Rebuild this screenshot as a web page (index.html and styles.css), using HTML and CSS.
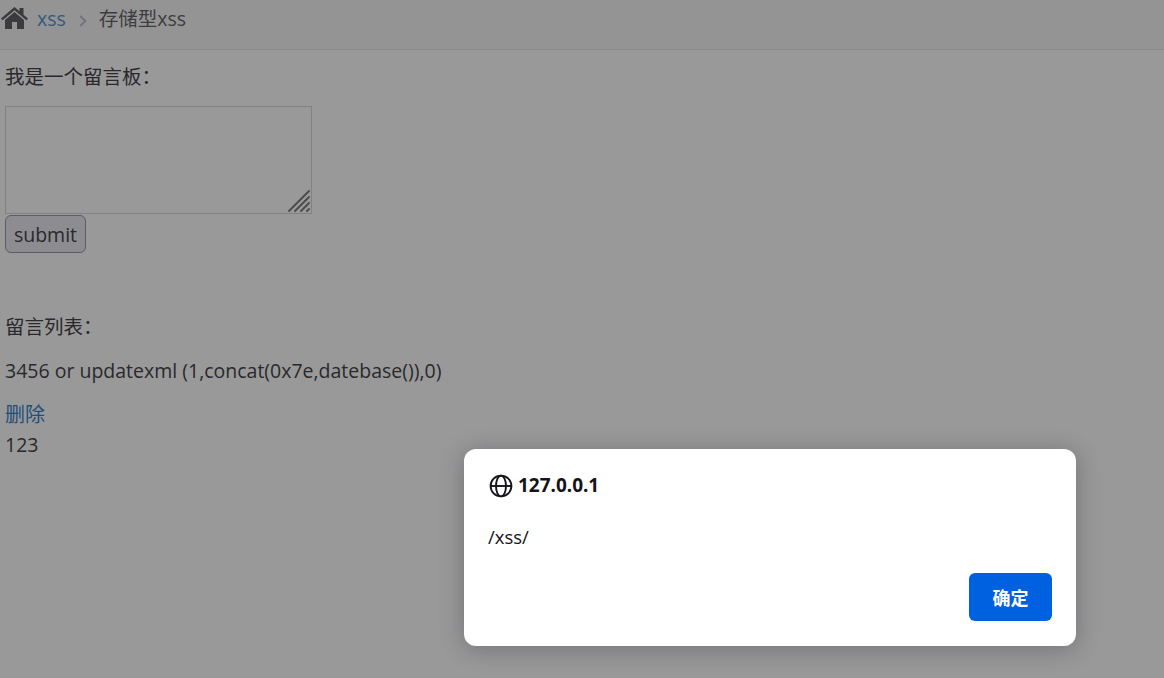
FILE: index.html
```html
<!DOCTYPE html>
<html lang="zh-CN">
<head>
  <meta charset="UTF-8">
  <title>存储型xss</title>
  <link rel="stylesheet" href="styles.css">
</head>
<body>
  <!-- Breadcrumbs -->
  <nav class="breadcrumbs">
    <svg class="home-icon" viewBox="0 0 27 22">
      <path d="M13.5 0L18.5 4.3V1H22.5V7.8L27 11.6L25.4 13.3L13.5 3.3L1.6 13.3L0 11.6Z"/>
      <path d="M13.5 4.9L23 12.9V22H16V15H11V22H4V12.9Z"/>
    </svg>
    <a class="crumb-link" href="#">xss</a>
    <svg class="crumb-arrow" viewBox="0 0 8 12">
      <path d="M1.2 1L6.4 6L1.2 11"/>
    </svg>
    <span>存储型xss</span>
  </nav>

  <!-- Message board -->
  <main class="content">
    <p class="title">我是一个留言板：</p>
    <form class="message-form">
      <div class="message-box">
        <textarea class="message-input"></textarea>
        <svg class="resize-grip" viewBox="0 0 22 22">
          <path d="M1 21L21 1M7 21L21 7M13 21L21 13M19 21L21 19"/>
        </svg>
      </div>
      <button class="submit" type="button">submit</button>
    </form>
    <p class="list-title">留言列表：</p>
    <p class="message">3456 or updatexml (1,concat(0x7e,datebase()),0)</p>
    <a class="delete" href="#">删除</a>
    <p class="message">123</p>
  </main>

  <!-- Alert dialog -->
  <div class="dialog">
    <div class="dialog-header">
      <svg class="globe-icon" viewBox="0 0 24 24">
        <circle cx="12" cy="12" r="10.4"/>
        <ellipse cx="12" cy="12" rx="5" ry="10.4"/>
        <path d="M1.6 12H22.4"/>
      </svg>
      <span>127.0.0.1</span>
    </div>
    <div class="dialog-text">/xss/</div>
    <div class="dialog-buttons">
      <button class="confirm">确定</button>
    </div>
  </div>
</body>
</html>
```
FILE: styles.css
```css
body {
  margin: 0;
  height: 678px;
  overflow: hidden;
  background: #99999a;
  color: #29292c;
  font-family: "Open Sans", "Noto Sans CJK SC", sans-serif;
  font-size: 19.5px;
  line-height: 30px;
}
p {
  margin: 0;
}
a {
  text-decoration: none;
}
/* Breadcrumbs */
.breadcrumbs {
  display: flex;
  align-items: center;
  box-sizing: border-box;
  height: 50px;
  padding: 0 1px 12px;
  background: #949495;
  border-bottom: 1px solid #8b8b8c;
  color: #3d3d40;
}
.home-icon {
  width: 27px;
  height: 22px;
  margin: 0 9px 1px 0;
  fill: #3b3b3e;
}
.crumb-link {
  color: #36597b;
}
.crumb-arrow {
  width: 8px;
  height: 12px;
  margin: 4px 12px 0 13px;
  fill: none;
  stroke: #757178;
  stroke-width: 1.8;
}
/* Message board */
.content {
  padding: 12px 5px 0;
}
.message-form {
  margin-top: 14px;
}
.message-box {
  position: relative;
  width: 307px;
  height: 108px;
}
.message-input {
  display: block;
  box-sizing: border-box;
  width: 100%;
  height: 100%;
  background: #99999a;
  border: 1px solid #828283;
  resize: none;
}
.resize-grip {
  position: absolute;
  right: 2px;
  bottom: 2px;
  width: 22px;
  height: 22px;
  fill: none;
  stroke: #4b4b4d;
  stroke-width: 1.8;
  stroke-linecap: round;
}
.submit {
  display: block;
  box-sizing: border-box;
  width: 81px;
  height: 38px;
  margin-top: 1px;
  padding: 2px 0 0;
  background: #8d8c91;
  border: 1px solid #5c5b66;
  border-radius: 6px;
  color: #29292c;
  font: inherit;
}
.list-title {
  margin-top: 59px;
}
.message {
  margin-top: 14px;
}
.delete {
  display: block;
  margin-top: 14px;
  color: #204f79;
  font-size: 20px;
}
.delete + .message {
  margin-top: 0;
}
/* Alert dialog */
.dialog {
  position: absolute;
  left: 464px;
  top: 449px;
  box-sizing: border-box;
  width: 612px;
  height: 197px;
  padding: 24px;
  background: #fff;
  border-radius: 12px;
  box-shadow: 0 3px 24px rgba(28, 27, 34, 0.3);
  color: #15141a;
  font-size: 18.5px;
  line-height: 24px;
}
.dialog-header {
  display: flex;
  align-items: center;
  gap: 5px;
  font-family: "Noto Sans", sans-serif;
  font-size: 19px;
  font-weight: 700;
}
.globe-icon {
  width: 24px;
  height: 24px;
  margin: 1px 0 -1px 1px;
  fill: none;
  stroke: #15141a;
  stroke-width: 1.9;
}
.dialog-text {
  margin-top: 28px;
}
.dialog-buttons {
  display: flex;
  justify-content: flex-end;
  margin-top: 24px;
}
.confirm {
  width: 83px;
  height: 48px;
  padding: 0;
  background: #0061e0;
  border: none;
  border-radius: 6px;
  color: #fbfbfe;
  font-family: "Noto Sans CJK SC", sans-serif;
  font-size: 18px;
  font-weight: 700;
}
```
